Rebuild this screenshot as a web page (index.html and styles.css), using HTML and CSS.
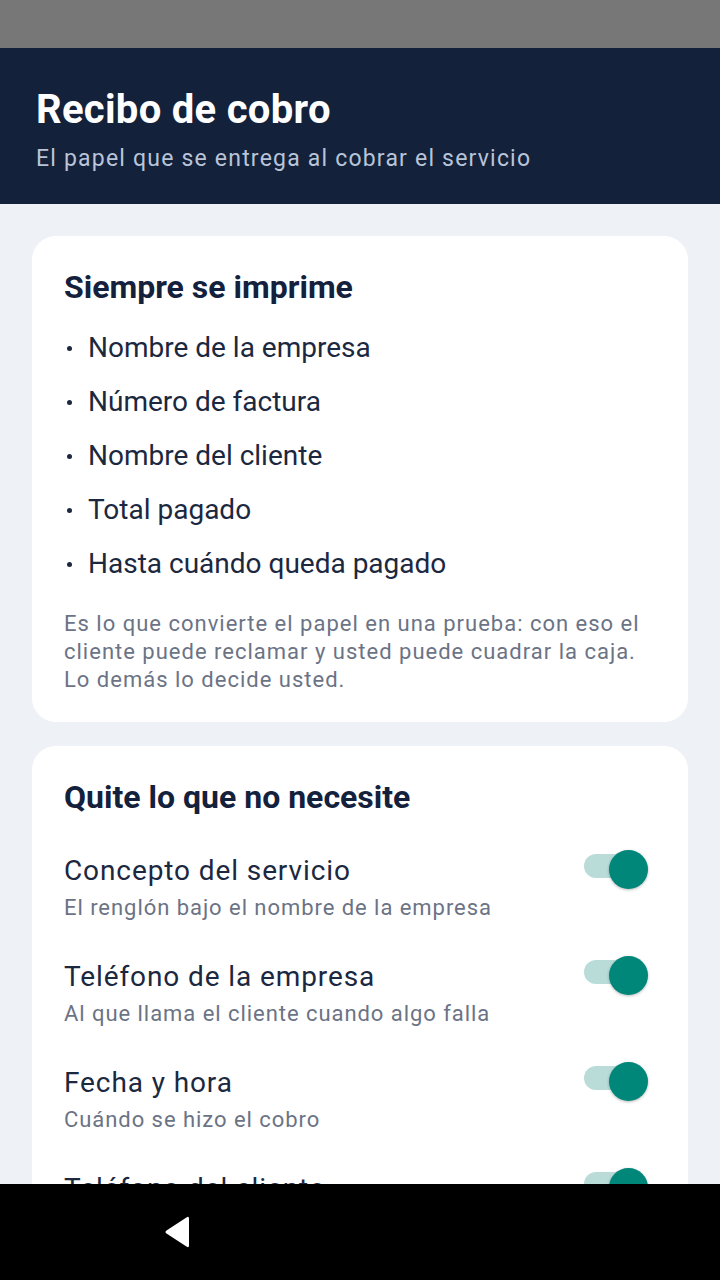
FILE: index.html
```html
<!DOCTYPE html>
<html lang="es">
<head>
<meta charset="utf-8">
<title>Recibo de cobro</title>
<link rel="stylesheet" href="styles.css">
</head>
<body>
<div class="screen">
  <div class="status-bar"></div>
  <main class="viewport">
    <header class="app-header">
      <h1 class="app-title">Recibo de cobro</h1>
      <p class="app-subtitle">El papel que se entrega al cobrar el servicio</p>
    </header>
    <div class="content">
      <section class="card">
        <h2 class="card-title">Siempre se imprime</h2>
        <ul class="bullets">
          <li class="bullet">Nombre de la empresa</li>
          <li class="bullet">Número de factura</li>
          <li class="bullet">Nombre del cliente</li>
          <li class="bullet">Total pagado</li>
          <li class="bullet">Hasta cuándo queda pagado</li>
        </ul>
        <p class="note">Es lo que convierte el papel en una prueba: con eso el cliente puede reclamar y usted puede cuadrar la caja. Lo demás lo decide usted.</p>
      </section>
      <section class="card">
        <h2 class="card-title">Quite lo que no necesite</h2>
        <div class="rows">
          <div class="row">
            <div class="row-text">
              <div class="row-title">Concepto del servicio</div>
              <div class="row-sub">El renglón bajo el nombre de la empresa</div>
            </div>
            <div class="switch"><span class="track"></span><span class="thumb"></span></div>
          </div>
          <div class="row">
            <div class="row-text">
              <div class="row-title">Teléfono de la empresa</div>
              <div class="row-sub">Al que llama el cliente cuando algo falla</div>
            </div>
            <div class="switch"><span class="track"></span><span class="thumb"></span></div>
          </div>
          <div class="row">
            <div class="row-text">
              <div class="row-title">Fecha y hora</div>
              <div class="row-sub">Cuándo se hizo el cobro</div>
            </div>
            <div class="switch"><span class="track"></span><span class="thumb"></span></div>
          </div>
          <div class="row">
            <div class="row-text">
              <div class="row-title">Teléfono del cliente</div>
              <div class="row-sub">Para avisarle si hay algún cambio</div>
            </div>
            <div class="switch"><span class="track"></span><span class="thumb"></span></div>
          </div>
        </div>
      </section>
    </div>
  </main>
  <nav class="nav-bar">
    <svg class="back-icon" width="30" height="34" viewBox="0 0 30 34" aria-hidden="true">
      <path d="M26 3.5 L26 30.5 Q26 33 23.8 31.8 L3.5 18.6 Q1.5 17 3.5 15.4 L23.8 2.2 Q26 1 26 3.5 Z" fill="#ffffff"/>
    </svg>
  </nav>
</div>
</body>
</html>
```
FILE: styles.css
```css
* { box-sizing: border-box; }
html, body { margin: 0; padding: 0; }
body {
  width: 720px;
  height: 1280px;
  overflow: hidden;
  font-family: Roboto, "Noto Sans", "Liberation Sans", sans-serif;
  background: #eef1f5;
}
.screen {
  width: 720px;
  height: 1280px;
  display: flex;
  flex-direction: column;
}
.status-bar {
  height: 48px;
  flex: 0 0 48px;
  background: #777777;
}
.viewport {
  flex: 1 1 auto;
  overflow: hidden;
  background: #eef1f5;
}
.app-header {
  background: #13213b;
  padding: 40px 36px 30px;
}
.app-title {
  margin: 0;
  font-size: 40px;
  line-height: 44px;
  font-weight: 700;
  letter-spacing: 0.3px;
  color: #ffffff;
}
.app-subtitle {
  margin: 12px 0 0;
  font-size: 23px;
  line-height: 30px;
  letter-spacing: 1.2px;
  color: #b9c4d8;
}
.content {
  padding: 32px;
  display: flex;
  flex-direction: column;
  gap: 24px;
}
.card {
  background: #ffffff;
  border-radius: 24px;
  padding: 33px 32px 28px;
}
.card-title {
  margin: 0;
  font-size: 32px;
  line-height: 36px;
  font-weight: 700;
  color: #14213d;
}
.bullets {
  list-style: none;
  margin: 16px 0 0;
  padding: 0;
}
.bullet {
  display: flex;
  align-items: center;
  font-size: 28px;
  line-height: 54px;
  color: #1b2840;
}
.bullet::before {
  content: "";
  width: 5px;
  height: 5px;
  border-radius: 50%;
  background: #1b2840;
  margin: 0 16px 0 3px;
  flex: 0 0 5px;
}
.note {
  margin: 19px 0 0;
  font-size: 22px;
  line-height: 28px;
  letter-spacing: 1px;
  color: #6b7385;
}
.rows {
  margin-top: 39px;
  display: flex;
  flex-direction: column;
  gap: 38px;
}
.row {
  display: flex;
  align-items: flex-start;
}
.row-text {
  flex: 1 1 auto;
}
.row-title {
  font-size: 28px;
  line-height: 34px;
  letter-spacing: 0.9px;
  color: #1b2840;
}
.row-sub {
  margin-top: 6px;
  font-size: 22px;
  line-height: 28px;
  letter-spacing: 0.95px;
  color: #6b7385;
}
.switch {
  position: relative;
  flex: 0 0 66px;
  width: 66px;
  height: 40px;
  margin: -4px 6px 0 0;
}
.track {
  position: absolute;
  left: 0;
  top: 4px;
  width: 60px;
  height: 24px;
  border-radius: 12px;
  background: #b9dcd9;
}
.thumb {
  position: absolute;
  left: 25px;
  top: 0;
  width: 39px;
  height: 39px;
  border-radius: 50%;
  background: #00877a;
  box-shadow: 0 1px 3px rgba(0, 0, 0, 0.28);
}
.nav-bar {
  height: 96px;
  flex: 0 0 96px;
  background: #000000;
  display: flex;
  align-items: center;
  padding-left: 163px;
}
.back-icon { display: block; }
```
